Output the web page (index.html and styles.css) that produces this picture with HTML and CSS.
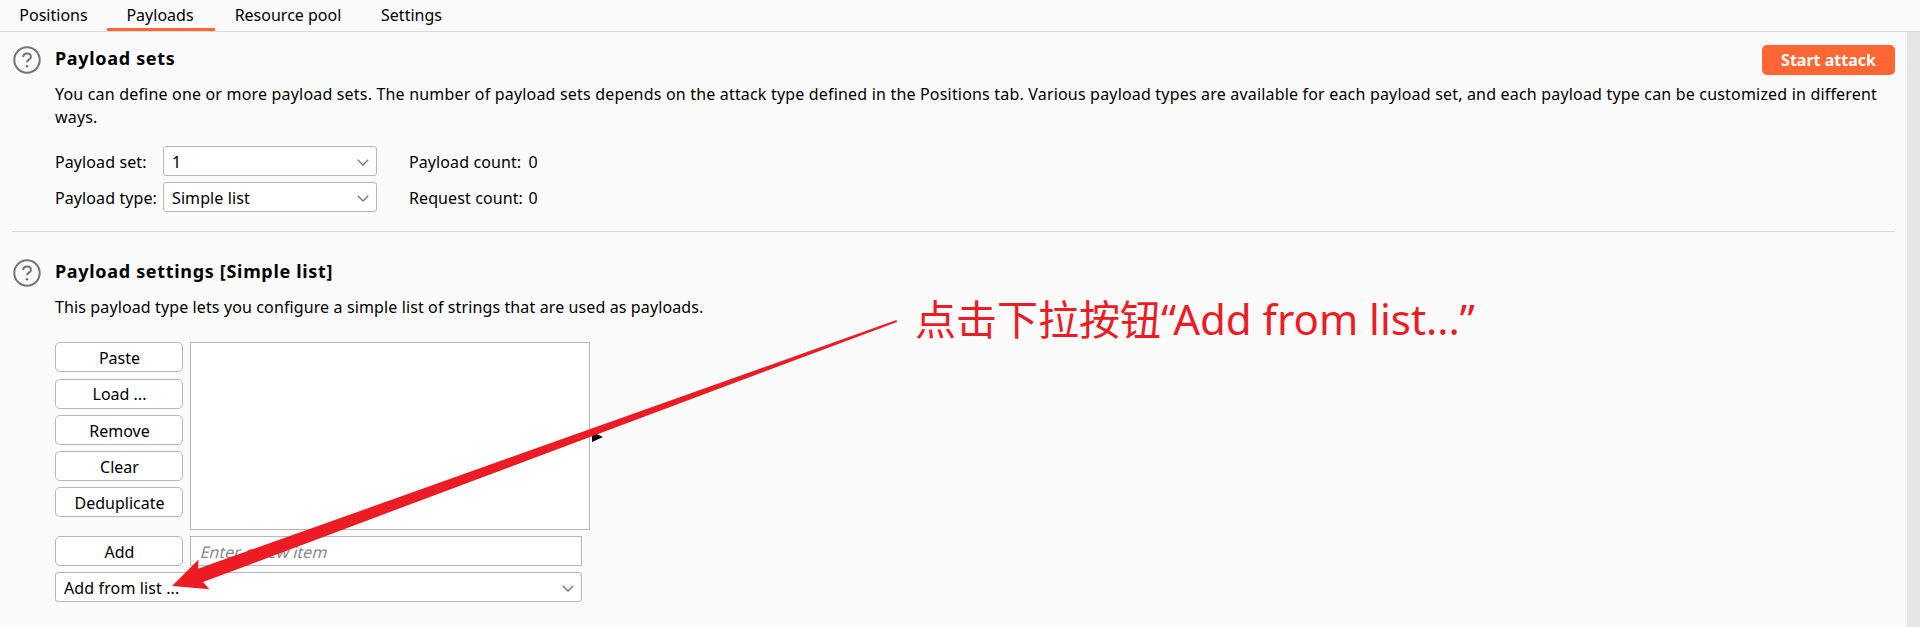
FILE: index.html
```html
<!DOCTYPE html>
<html lang="en">
<head>
<meta charset="utf-8">
<title>Payloads</title>
<link rel="stylesheet" href="styles.css">
</head>
<body>
<nav class="tabs">
  <a class="tab tab-positions">Positions</a>
  <a class="tab tab-payloads active">Payloads</a>
  <a class="tab tab-pool">Resource pool</a>
  <a class="tab tab-settings">Settings</a>
</nav>
<div class="body">
  <main class="content">
    <section class="section sets">
      <svg class="help" viewBox="0 0 28 28"><circle cx="14" cy="14" r="12.7"/><path d="M10.200 11.100c0-2.200 1.600-3.600 3.800-3.600s3.900 1.300 3.900 3.400c0 2.800-3.900 2.700-3.900 5.300"/><circle class="dot" cx="14" cy="20.200" r="1.300"/></svg>
      <div class="section-body">
        <div class="heading-row">
          <h2>Payload sets</h2>
          <button class="start">Start attack</button>
        </div>
        <p class="desc desc-sets">You can define one or more payload sets. The number of payload sets depends on the attack type defined in the Positions tab. Various payload types are available for each payload set, and each payload type can be customized in different<br>ways.</p>
        <div class="form">
          <label>Payload set:</label>
          <div class="select"><span>1</span><svg class="chev" viewBox="0 0 12 7"><path d="M.8.8 6 6 11.200.8"/></svg></div>
          <div class="count"><span class="count-label">Payload count:</span><span>0</span></div>
          <label>Payload type:</label>
          <div class="select"><span>Simple list</span><svg class="chev" viewBox="0 0 12 7"><path d="M.8.8 6 6 11.200.8"/></svg></div>
          <div class="count"><span class="count-label">Request count:</span><span>0</span></div>
        </div>
      </div>
    </section>
    <section class="section settings">
      <svg class="help" viewBox="0 0 28 28"><circle cx="14" cy="14" r="12.7"/><path d="M10.200 11.100c0-2.200 1.600-3.600 3.800-3.600s3.900 1.300 3.900 3.400c0 2.800-3.900 2.700-3.900 5.300"/><circle class="dot" cx="14" cy="20.200" r="1.300"/></svg>
      <div class="section-body">
        <h2>Payload settings [Simple list]</h2>
        <p class="desc desc-settings">This payload type lets you configure a simple list of strings that are used as payloads.</p>
        <div class="list-editor">
          <div class="buttons">
            <button class="btn first">Paste</button>
            <button class="btn load">Load ...</button>
            <button class="btn">Remove</button>
            <button class="btn">Clear</button>
            <button class="btn">Deduplicate</button>
          </div>
          <div class="listbox"></div>
          <svg class="marker" viewBox="0 0 11 10"><path d="M0 0 11 5 0 10z"/></svg>
        </div>
        <div class="add-row">
          <button class="btn">Add</button>
          <div class="input"><span class="placeholder">Enter a new item</span></div>
        </div>
        <div class="select wide"><span>Add from list ...</span><svg class="chev" viewBox="0 0 12 7"><path d="M.8.8 6 6 11.200.8"/></svg></div>
      </div>
    </section>
  </main>
  <div class="scrollbar"></div>
</div>
<svg class="arrow" viewBox="0 0 1920 627"><path d="M172 586 198.500 559.500 198 568.700 896.500 320 897 322 203 582 209.500 589.300z"/></svg>
<div class="note" lang="zh-CN"><span>点击下拉按钮</span><span class="latin">“Add from list...”</span></div>
</body>
</html>
```
FILE: styles.css
```css
* { box-sizing: border-box; }
body {
  margin: 0;
  height: 627px;
  overflow: hidden;
  display: flex;
  flex-direction: column;
  position: relative;
  background: #fbfbfb;
  color: #000;
  font: 16px/24px "Noto Sans", "Noto Sans CJK SC", sans-serif;
}
button { font: inherit; color: inherit; padding: 0; }
.tabs { display: flex; height: 32px; border-bottom: 1px solid #d9d9d9; flex: none; }
.tab { height: 31px; line-height: 31px; text-align: center; white-space: nowrap; }
.tab-positions { width: 107px; }
.tab-payloads { width: 108px; padding-right: 2px; }
.tab-pool { width: 146px; }
.tab-settings { width: 101px; }
.tab.active { border-bottom: 3px solid #ff6633; }
.body { display: flex; flex: 1; min-height: 0; }
.content { flex: 1; padding: 13px 12px 0; }
.scrollbar { width: 13px; background: #e6e6e6; }
.section { display: flex; gap: 14px; }
.sets { height: 187px; border-bottom: 1px solid #d9d9d9; }
.settings { padding-top: 26px; }
.help { width: 28px; height: 28px; margin: 1px 0 0 1px; flex: none; fill: none; stroke: #757575; stroke-width: 2; }
.help .dot { fill: #757575; stroke: none; }
.section-body { flex: 1; }
.heading-row { display: flex; justify-content: space-between; height: 30px; }
h2 { margin: 0; font-size: 18px; font-weight: 700; line-height: 26px; height: 27px; letter-spacing: .68px; }
.start { width: 133px; height: 30px; border: 0; border-radius: 5px; background: #ff6633; color: #fff; font-weight: 700; }
.desc { margin: 0; line-height: 23px; white-space: nowrap; }
.desc-sets { padding-top: 8px; letter-spacing: .184px; }
.desc-settings { padding-top: 11px; letter-spacing: .118px; }
.form { display: grid; grid-template-columns: 108px 214px auto; grid-auto-rows: 30px; row-gap: 6px; margin-top: 17px; line-height: 32px; letter-spacing: .1px; }
.count { display: flex; padding-left: 32px; }
.count-label { width: 119.500px; }
.select { display: flex; align-items: center; justify-content: space-between; height: 30px; padding: 2px 7px 0 8px; border: 1px solid #b9b6b7; border-radius: 3px; background: #fff; }
.wide { width: 527px; letter-spacing: .12px; }
.chev { width: 12px; height: 7px; fill: none; stroke: #777; stroke-width: 1.3; }
.list-editor { display: flex; margin-top: 23px; position: relative; }
.buttons { display: flex; flex-direction: column; gap: 6px; }
.btn { width: 128px; height: 30px; padding: 2px 0 0 1px; border: 1px solid #b9b6b7; border-radius: 5px; background: #fff; }
.first { margin-bottom: 1px; }
.load { padding-top: 0; }
.listbox { width: 400px; height: 188px; margin-left: 7px; border: 1px solid #b9b6b7; background: #fff; }
.marker { position: absolute; left: 537px; top: 90px; width: 11px; height: 10px; }
.add-row { display: flex; gap: 7px; margin: 6px 0; }
.input { width: 392px; height: 30px; padding-left: 10px; border: 1px solid #b9b6b7; background: #fff; color: #888; line-height: 30px; }
.placeholder { display: inline-block; transform: skewX(-15deg); }
.arrow { position: absolute; left: 0; top: 0; width: 1920px; height: 627px; fill: #ed1c24; }
.note { position: absolute; left: 915px; top: 289px; display: flex; color: #ed1c24; font-size: 41px; line-height: 60px; white-space: nowrap; }
.latin { font-size: 42px; }
```
